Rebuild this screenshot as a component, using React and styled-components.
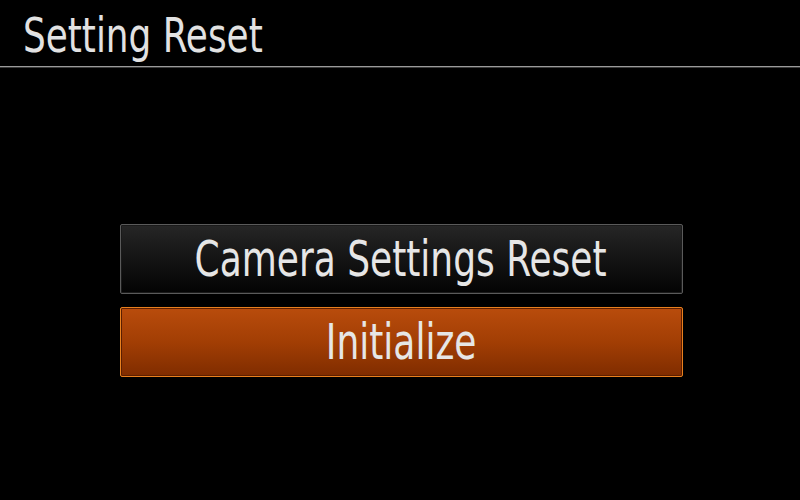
import React from "react";
import styled, { createGlobalStyle } from "styled-components";

const Global = createGlobalStyle`
  html, body {
    margin: 0;
    padding: 0;
    background: #000;
  }
  body {
    font-family: "DejaVu Sans Condensed", "Liberation Sans", sans-serif;
  }
`;

const Screen = styled.div`
  width: 800px;
  height: 500px;
  background: #000;
  display: flex;
  flex-direction: column;
  overflow: hidden;
`;

const Header = styled.div`
  height: 67px;
  border-bottom: 1px solid #9a9a9a;
  box-shadow: 0 1px 0 #3a3a3a;
  display: flex;
  align-items: center;
  padding-left: 23px;
  padding-top: 4px;
  box-sizing: border-box;
`;

const Title = styled.h1`
  margin: 0;
  font-weight: normal;
  font-size: 48px;
  color: #e2e2e2;
  transform: scaleX(0.83);
  transform-origin: left center;
`;

const Menu = styled.div`
  flex: 1;
  display: flex;
  flex-direction: column;
  align-items: center;
  padding-top: 157px;
  gap: 13px;
`;

const Option = styled.div`
  width: 563px;
  height: 70px;
  margin-left: 2px;
  box-sizing: border-box;
  border-radius: 2px;
  display: flex;
  align-items: center;
  justify-content: center;
  font-size: 50px;
  color: #e6e6e6;
  border: 1px solid ${(p) => (p.$selected ? "#e8801e" : "#5a5a5a")};
  box-shadow: inset 0 0 0 1px ${(p) => (p.$selected ? "#5c1e00" : "#1a1a1a")};
  background: ${(p) =>
    p.$selected
      ? "linear-gradient(to bottom, #b94c0c 0%, #a23e04 50%, #7f2c00 100%)"
      : "linear-gradient(to bottom, #262626 0%, #141414 50%, #030303 100%)"};
`;

const Label = styled.span`
  display: inline-block;
  transform: scaleX(0.8);
`;

export default function App() {
  return (
    <>
      <Global />
      <Screen>
        <Header>
          <Title>Setting Reset</Title>
        </Header>
        <Menu>
          <Option>
            <Label>Camera Settings Reset</Label>
          </Option>
          <Option $selected>
            <Label>Initialize</Label>
          </Option>
        </Menu>
      </Screen>
    </>
  );
}
